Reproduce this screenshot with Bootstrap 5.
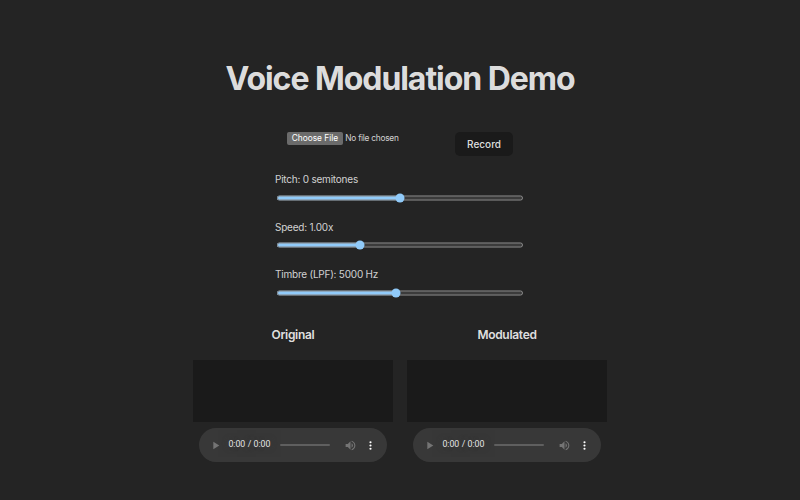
<!doctype html>
<html lang="en" data-bs-theme="dark">
<head>
<meta charset="utf-8">
<title>Voice Modulation Demo</title>
<link rel="stylesheet" href="https://cdn.jsdelivr.net/npm/bootstrap@5.3.0/dist/css/bootstrap.min.css">
<style>
html{color-scheme:dark}
body{background:#242424;color:rgba(255,255,255,.87);font-family:Inter,"Liberation Sans",sans-serif;font-size:10px;line-height:15px;min-height:500px}
.vm-title{font-size:32px;font-weight:700;line-height:35px;letter-spacing:-1.05px;margin:0;padding-top:61px;color:rgba(255,255,255,.87)}
.vm-top{margin-top:36px}
.vm-file{zoom:.625;font-size:13.33px;letter-spacing:-.4px;width:269px;color:rgba(255,255,255,.8)}
.vm-rec{background:#1a1a1a;color:rgba(255,255,255,.87);border:1px solid transparent;border-radius:5px;font-size:10px;font-weight:500;line-height:15px;padding:4px 0;height:24px;width:58px}
.vm-sliders{width:250px;margin:16px auto 0}
.vm-row{height:47.5px}
.vm-lbl{display:block;font-size:10px;line-height:15px;letter-spacing:-.22px;margin:0;color:rgba(255,255,255,.8)}
.vm-range{zoom:.625;width:396px;accent-color:#90caf9;display:block;margin:9px 2px 0}
.vm-cols{gap:14px;margin-top:11px}
.vm-col{width:200px}
.vm-head{font-size:12px;font-weight:600;line-height:18px;letter-spacing:-.3px;margin:0 0 16px;color:rgba(255,255,255,.87)}
.vm-canvas{height:62.5px;background:#1a1a1a}
.vm-audio{zoom:.625;display:block;margin:10px auto 0}
</style>
</head>
<body>
<h1 class="vm-title text-center">Voice Modulation Demo</h1>
<div class="vm-top d-flex justify-content-center align-items-start">
  <input class="vm-file" type="file" accept="audio/*">
  <button class="vm-rec" type="button">Record</button>
</div>
<div class="vm-sliders">
  <div class="vm-row"><label class="vm-lbl">Pitch: 0 semitones</label><input class="vm-range" type="range" min="-12" max="12" value="0"></div>
  <div class="vm-row"><label class="vm-lbl">Speed: 1.00x</label><input class="vm-range" type="range" min="0.5" max="2" step="0.01" value="1"></div>
  <div class="vm-row"><label class="vm-lbl">Timbre (LPF): 5000 Hz</label><input class="vm-range" type="range" min="300" max="10000" value="5000"></div>
</div>
<div class="vm-cols d-flex justify-content-center">
  <div class="vm-col text-center"><h3 class="vm-head">Original</h3><div class="vm-canvas"></div><audio class="vm-audio" controls></audio></div>
  <div class="vm-col text-center"><h3 class="vm-head">Modulated</h3><div class="vm-canvas"></div><audio class="vm-audio" controls></audio></div>
</div>
<script src="https://cdn.jsdelivr.net/npm/bootstrap@5.3.0/dist/js/bootstrap.bundle.min.js"></script>
</body>
</html>
